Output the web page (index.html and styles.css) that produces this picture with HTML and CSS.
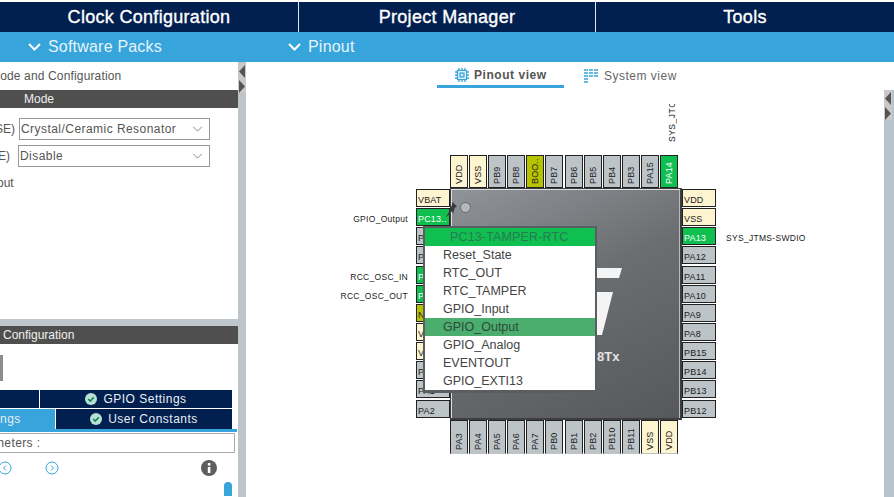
FILE: index.html
```html
<!DOCTYPE html>
<html lang="en">
<head>
<meta charset="utf-8">
<title>Pinout</title>
<link rel="stylesheet" href="styles.css">
</head>
<body>
<nav class="nav">
  <div class="nav-tab nav-first">Clock Configuration</div>
  <div class="nav-tab nav-second">Project Manager</div>
  <div class="nav-tab nav-third">Tools</div>
</nav>
<div class="bar">
  <div class="bar-cell bar-software"><svg class="chev" viewBox="0 0 13 8"><path d="M1 1l5.500 5.500L12 1"/></svg>Software Packs</div>
  <div class="bar-cell"><svg class="chev" viewBox="0 0 13 8"><path d="M1 1l5.500 5.500L12 1"/></svg>Pinout</div>
</div>
<div class="workspace">
  <aside class="side">
    <div class="side-title">Mode and Configuration</div>
    <div class="dark-head mode-head">Mode</div>
    <div class="form-row row-one"><span class="lbl lbl-one">(HSE)</span><div class="select sel-one">Crystal/Ceramic Resonator<svg class="sel-chev" viewBox="0 0 12 7"><path d="M1 1l5 5 5-5"/></svg></div></div>
    <div class="form-row row-two"><span class="lbl lbl-two">(LSE)</span><div class="select sel-two">Disable<svg class="sel-chev" viewBox="0 0 12 7"><path d="M1 1l5 5 5-5"/></svg></div></div>
    <div class="out-line">out</div>
    <div class="spacer"></div>
    <div class="sep-band"></div>
    <div class="dark-head conf-head">Configuration</div>
    <div class="grey-block"></div>
    <div class="tab-row tab-row-one">
      <div class="tab tab-stub"></div>
      <div class="tab tab-gpio"><svg class="tick" viewBox="0 0 12 12"><circle cx="6" cy="6" r="6"/><path d="M3.200 6l2 2 3.600-3.600"/></svg>GPIO Settings</div>
    </div>
    <div class="tab-row tab-row-two">
      <div class="tab tab-active">ngs</div>
      <div class="tab tab-user"><svg class="tick" viewBox="0 0 12 12"><circle cx="6" cy="6" r="6"/><path d="M3.200 6l2 2 3.600-3.600"/></svg>User Constants</div>
    </div>
    <div class="tab-rule"></div>
    <div class="search"><span class="search-text">Parameters :</span></div>
    <div class="tools">
      <svg class="nav-ico prev" viewBox="0 0 14 14"><circle cx="7" cy="7" r="6"/><path d="M8 4.500L5.500 7 8 9.500"/></svg>
      <svg class="nav-ico next" viewBox="0 0 14 14"><circle cx="7" cy="7" r="6"/><path d="M6 4.500L8.500 7 6 9.500"/></svg>
      <svg class="info" viewBox="0 0 16 16"><circle cx="8" cy="8" r="8"/><rect x="6.800" y="7" width="2.600" height="6"/><rect x="6.800" y="3" width="2.600" height="2.600"/></svg>
    </div>
    <div class="thumb"></div>
  </aside>
  <div class="splitter">
    <svg class="split-arrows" viewBox="0 0 8 30"><path d="M7 2L1 8.500 7 15z"/><path d="M1 17l6 6.500L1 30z"/></svg>
  </div>
  <main class="main">
    <div class="views">
      <div class="view view-on"><svg class="chip-ico" viewBox="0 0 14 14"><rect x="2.500" y="2.500" width="9" height="9"/><rect class="chip-core" x="5" y="5" width="4" height="4"/><path d="M4 0v2M7 0v2M10 0v2M4 12v2M7 12v2M10 12v2M0 4h2M0 7h2M0 10h2M12 4h2M12 7h2M12 10h2"/></svg>Pinout view</div>
      <div class="view view-off"><svg class="sys-ico" viewBox="0 0 14 14"><path d="M0 1h4M5 1h4M10 1h4M0 4h4M5 4h4M10 4h4M0 7h4M5 7h4M10 7h4M0 10h4M0 13h4"/></svg>System view</div>
    </div>
    <div class="canvas">
      <div class="v-label">SYS_JTCK-SWCLK</div>
      <div class="chip">
        <div class="corner"></div>
        <div class="pins pins-top">
          <div class="pin pin-v power">VDD</div><div class="pin pin-v power">VSS</div><div class="pin pin-v">PB9</div><div class="pin pin-v">PB8</div><div class="pin pin-v boot">BOO..</div><div class="pin pin-v">PB7</div><div class="pin pin-v">PB6</div><div class="pin pin-v">PB5</div><div class="pin pin-v">PB4</div><div class="pin pin-v">PB3</div><div class="pin pin-v">PA15</div><div class="pin pin-v used">PA14</div>
        </div>
        <div class="corner"></div>
        <div class="pins pins-left">
          <div class="pin power">VBAT</div><div class="pin used">PC13..</div><div class="pin">PC14</div><div class="pin">PC15</div><div class="pin used">PD0</div><div class="pin used">PD1</div><div class="pin boot">NRST</div><div class="pin power">VSSA</div><div class="pin power">VDDA</div><div class="pin">PA0</div><div class="pin">PA1</div><div class="pin">PA2</div>
        </div>
        <div class="body">
          <svg class="st-logo" viewBox="0 0 25 67"><polygon points="0,0 25,0 22,10 0,10"/><polygon points="0,24 16,24 5,67 0,67"/></svg>
          <div class="part">8Tx</div>
          <div class="dot"></div>
        </div>
        <div class="pins pins-right">
          <div class="pin power">VDD</div><div class="pin power">VSS</div><div class="pin used">PA13</div><div class="pin">PA12</div><div class="pin">PA11</div><div class="pin">PA10</div><div class="pin">PA9</div><div class="pin">PA8</div><div class="pin">PB15</div><div class="pin">PB14</div><div class="pin">PB13</div><div class="pin">PB12</div>
        </div>
        <div class="corner"></div>
        <div class="pins pins-bottom">
          <div class="pin pin-v">PA3</div><div class="pin pin-v">PA4</div><div class="pin pin-v">PA5</div><div class="pin pin-v">PA6</div><div class="pin pin-v">PA7</div><div class="pin pin-v">PB0</div><div class="pin pin-v">PB1</div><div class="pin pin-v">PB2</div><div class="pin pin-v">PB10</div><div class="pin pin-v">PB11</div><div class="pin pin-v power">VSS</div><div class="pin pin-v power">VDD</div>
        </div>
        <div class="corner"></div>
        <span class="sig sig-gpio">GPIO_Output</span>
        <span class="sig sig-in">RCC_OSC_IN</span>
        <span class="sig sig-out">RCC_OSC_OUT</span>
        <span class="sig-right">SYS_JTMS-SWDIO</span>
        <svg class="push" viewBox="0 0 11 15"><path d="M6.500 0L11 4.500 9 5.500 7.500 9.500 7.500 11.500 2.500 7 4.500 6.500 6 2.500zM3.500 9L0 15l5-3.500z"/></svg>
        <ul class="menu">
          <li class="menu-head">PC13-TAMPER-RTC</li>
          <li>Reset_State</li>
          <li>RTC_OUT</li>
          <li>RTC_TAMPER</li>
          <li>GPIO_Input</li>
          <li class="menu-hot">GPIO_Output</li>
          <li>GPIO_Analog</li>
          <li>EVENTOUT</li>
          <li>GPIO_EXTI13</li>
        </ul>
      </div>
    </div>
    <div class="right-split">
      <svg class="split-arrows" viewBox="0 0 8 30"><path d="M7 2L1 8.500 7 15z"/><path d="M1 17l6 6.500L1 30z"/></svg>
    </div>
  </main>
</div>
</body>
</html>
```
FILE: styles.css
```css
* { box-sizing: border-box; }
html, body { margin: 0; padding: 0; }
body {
  width: 894px;
  height: 497px;
  overflow: hidden;
  background: #fff;
  font-family: "Liberation Sans", Arial, sans-serif;
  padding-top: 2px;
}
.nav {
  display: grid;
  grid-template-columns: 299px 297px 298px;
  height: 30px;
  background: #012050;
  color: #fff;
}
.nav-tab {
  font-size: 18px;
  letter-spacing: 0.3px;
  -webkit-text-stroke: 0.35px #fff;
  line-height: 30px;
  border-right: 1px solid #dfe8ef;
  text-align: center;
}
.nav-third { border-right: 0; }
.bar {
  display: flex;
  height: 30px;
  background: #37a4db;
  color: #e6f4fb;
  font-size: 16px;
  letter-spacing: 0.2px;
  line-height: 30px;
}
.bar-cell { display: flex; align-items: center; }
.bar-software { width: 288px; padding-left: 28px; }
.chev {
  width: 13px;
  height: 8px;
  margin-right: 7px;
  fill: none;
  stroke: #fff;
  stroke-width: 2;
}
.workspace { display: flex; height: 435px; }
.side {
  width: 238px;
  height: 435px;
  overflow: hidden;
  display: flex;
  flex-direction: column;
  color: #555;
}
.side-title {
  height: 28px;
  line-height: 29px;
  font-size: 12px;
  margin-left: -10px;
  letter-spacing: 0.15px;
  white-space: nowrap;
}
.dark-head {
  height: 18px;
  background: #4f4f4f;
  color: #f0f0f0;
  font-size: 12px;
  line-height: 19px;
  white-space: nowrap;
}
.mode-head { padding-left: 24px; }
.form-row { display: flex; height: 22px; }
.row-one { margin-top: 10px; }
.row-two { margin-top: 5px; }
.lbl {
  font-size: 12px;
  line-height: 22px;
  white-space: nowrap;
  display: flex;
  justify-content: flex-end;
}
.lbl-one { width: 15px; margin-right: 4px; }
.lbl-two { width: 10px; margin-right: 8px; }
.select {
  border: 1px solid #999;
  height: 22px;
  font-size: 12px;
  line-height: 20px;
  padding-left: 1px;
  letter-spacing: 0.45px;
  display: flex;
  justify-content: space-between;
  align-items: center;
  padding-right: 6px;
}
.sel-one { width: 191px; }
.sel-two { width: 192px; }
.sel-chev { width: 11px; height: 6px; fill: none; stroke: #777; stroke-width: 1; }
.out-line {
  font-size: 12px;
  margin-top: 9px;
  line-height: 14px;
  margin-left: -3px;
}
.spacer { height: 129px; }
.sep-band { height: 7px; background: #c0c7cc; }
.conf-head { padding-left: 3px; }
.grey-block { width: 3px; height: 26px; margin-top: 11px; background: #8c8c8c; }
.tab-row {
  display: flex;
  width: 232px;
  color: #e8eef3;
  font-size: 12px;
  letter-spacing: 0.5px;
}
.tab-row-one { margin-top: 9px; height: 18px; }
.tab-row-two { margin-top: 1px; height: 20px; }
.tab {
  background: #012050;
  display: flex;
  align-items: center;
  justify-content: center;
}
.tab-stub { width: 39px; margin-right: 1px; }
.tab-gpio { width: 192px; }
.tab-active { width: 55px; background: #37a4db; justify-content: flex-start; margin-right: 1px; }
.tab-user { width: 176px; }
.tick { width: 12px; height: 12px; margin-right: 6px; }
.tick circle { fill: #b9e0d3; }
.tick path { fill: none; stroke: #0d8a5c; stroke-width: 1.600; }
.tab-rule { width: 237px; height: 3px; background: #37a4db; }
.search {
  width: 235px;
  height: 20px;
  margin-top: 1px;
  border: 1px solid #aaa;
  border-left: 0;
  font-size: 12px;
  line-height: 19px;
  letter-spacing: 0.4px;
  overflow: hidden;
  white-space: nowrap;
}
.search-text { display: block; margin-left: -33px; }
.tools {
  display: flex;
  align-items: center;
  height: 16px;
  margin-top: 7px;
}
.nav-ico { width: 14px; height: 14px; flex: none; fill: none; stroke: #37a4db; stroke-width: 1; }
.prev { margin-left: -2px; }
.next { margin-left: 33px; }
.info { width: 16px; height: 16px; flex: none; margin-left: 142px; }
.info circle { fill: #5e5e5e; }
.info rect { fill: #fff; }
.thumb {
  width: 8px;
  height: 14px;
  flex: none;
  margin-left: 224px;
  margin-top: 6px;
  background: #37a4db;
  border-radius: 4px 4px 0 0;
}
.splitter {
  width: 8px;
  background: #bcc5ca;
  padding-top: 1px;
  flex: none;
}
.split-arrows { display: block; width: 8px; height: 30px; fill: #555; background: #c9c9c9; }
.main { flex: 1; position: relative; min-width: 0; }
.views { display: flex; height: 26px; padding-left: 191px; }
.view {
  display: flex;
  align-items: center;
  font-size: 12px;
  letter-spacing: 0.5px;
  color: #555;
  height: 26px;
}
.view-on {
  width: 127px;
  padding-left: 18px;
  border-bottom: 3px solid #37a4db;
  font-weight: bold;
  letter-spacing: 0.55px;
  padding-top: 3px;
}
.view-off { padding-left: 20px; color: #666; letter-spacing: 0.5px; padding-top: 1px; }
.chip-ico {
  width: 14px;
  height: 14px;
  margin-right: 5px;
  fill: none;
  stroke: #37a4db;
  stroke-width: 1.300;
}
.chip-core { fill: #cfe9f6; }
.sys-ico {
  width: 14px;
  height: 14px;
  margin-right: 6px;
  fill: none;
  stroke: #37a4db;
  stroke-width: 1.400;
}
.canvas { position: relative; }
.v-label {
  position: absolute;
  left: 421px;
  top: 16px;
  height: 38px;
  width: 10px;
  overflow: hidden;
  writing-mode: vertical-rl;
  transform: rotate(180deg);
  font-size: 8.500px;
  line-height: 10px;
  letter-spacing: 0.5px;
  color: #222;
  white-space: nowrap;
}
.chip {
  position: absolute;
  left: 170px;
  top: 67px;
  display: grid;
  grid-template-columns: 34px 232px 34px;
  grid-template-rows: 33px 232px 34px;
}
.corner { width: 34px; }
.pins { display: grid; }
.pins-top, .pins-bottom { grid-template-columns: repeat(12, 18px); gap: 1.100px; }
.pins-left, .pins-right { grid-template-rows: repeat(12, 18px); gap: 1.150px; padding-top: 1px; }
.pin {
  background: #bcc4c8;
  border: 1px solid #222;
  color: #222;
  font-size: 9px;
  letter-spacing: 0.15px;
  line-height: 16px;
  padding: 2px 0 0 1px;
  white-space: nowrap;
  overflow: hidden;
}
.pin-v {
  writing-mode: vertical-rl;
  transform: rotate(180deg);
  line-height: 16px;
  padding: 3px 0 0;
}
.pins-bottom .pin { border-top-color: #bcc4c8; }
.power { background: #fdf5cf; }
.used { background: #0fbf4f; color: #fff; }
.boot { background: #b6c400; }
.body {
  position: relative;
  background: linear-gradient(155deg, #909498 0%, #6b6e71 45%, #56585a 100%);
  border: 2px solid #3c3e40;
  border-top-width: 1px;
  border-left-width: 1px;
  box-shadow: inset 1px 1px 0 #dcdee0, inset -1px 0 0 #b9bcbe;
}
.st-logo { position: absolute; left: 146px; top: 79px; width: 25px; height: 67px; fill: #f4f4f4; }
.part {
  position: absolute;
  left: 146px;
  top: 160px;
  font-size: 13px;
  font-weight: bold;
  color: #e4e4e4;
}
.dot {
  position: absolute;
  left: 9px;
  top: 13px;
  width: 11px;
  height: 11px;
  border-radius: 50%;
  background: #b5b9bd;
  border: 1px solid #666;
}
.sig, .sig-right {
  position: absolute;
  font-size: 8.500px;
  letter-spacing: 0.3px;
  color: #222;
  white-space: nowrap;
  line-height: 11px;
}
.sig { right: 308px; }
.sig-gpio { top: 59px; }
.sig-in { top: 117px; }
.sig-out { top: 136px; }
.sig-right { left: 310px; top: 78px; }
.push { position: absolute; left: 30px; top: 47px; width: 11px; height: 15px; fill: #3a3a3a; }
.menu {
  position: absolute;
  left: 7px;
  top: 71px;
  width: 174px;
  margin: 0;
  padding: 0;
  list-style: none;
  background: #fff;
  border: 2px solid #5a5e60;
  border-bottom-width: 3px;
}
.menu li {
  height: 18px;
  line-height: 18px;
  padding-left: 18px;
  font-size: 12.500px;
  color: #444;
}
.menu .menu-head { background: #0fbf4f; color: #2a7a55; padding-left: 25px; letter-spacing: 0.15px; }
.menu .menu-hot { background: #4cae6e; color: #2d4a3c; }
.right-split {
  position: absolute;
  left: 638px;
  top: 28px;
  width: 10px;
  height: 407px;
  background: #b8c4cc;
}
```
